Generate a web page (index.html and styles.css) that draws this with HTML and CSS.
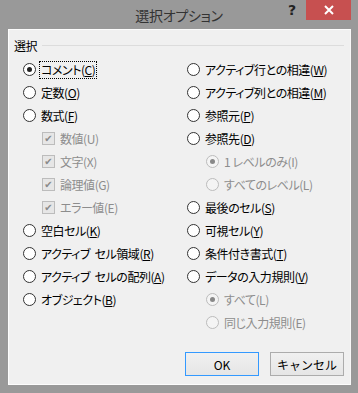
FILE: index.html
```html
<!DOCTYPE html>
<html lang="ja">
<head>
    <meta charset="UTF-8">
    <title>選択オプション</title>
    <link rel="stylesheet" href="styles.css">
</head>
<body>

<div class="window">
    <div class="titlebar">
        <span class="title">選択オプション</span>
        <span class="help">?</span>
        <span class="close">
            <svg width="10" height="10" viewBox="0 0 10 10"><path d="M1 1 L9 9 M9 1 L1 9" stroke="#fff" stroke-width="2"/></svg>
        </span>
    </div>

    <div class="client">
        <div class="group-head">
            <span>選択</span>
            <div class="group-line"></div>
        </div>

        <div class="columns">
            <div class="col">
                <div class="row"><span class="radio checked"></span><span class="label focus">コメント(<u>C</u>)</span></div>
                <div class="row"><span class="radio"></span><span class="label">定数(<u>O</u>)</span></div>
                <div class="row"><span class="radio"></span><span class="label">数式(<u>F</u>)</span></div>
                <div class="row sub disabled"><span class="check">&#10004;</span><span class="label">数値(U)</span></div>
                <div class="row sub disabled"><span class="check">&#10004;</span><span class="label">文字(X)</span></div>
                <div class="row sub disabled"><span class="check">&#10004;</span><span class="label">論理値(G)</span></div>
                <div class="row sub disabled"><span class="check">&#10004;</span><span class="label">エラー値(E)</span></div>
                <div class="row"><span class="radio"></span><span class="label">空白セル(<u>K</u>)</span></div>
                <div class="row"><span class="radio"></span><span class="label">アクティブ&nbsp; セル領域(<u>R</u>)</span></div>
                <div class="row"><span class="radio"></span><span class="label">アクティブ&nbsp; セルの配列(<u>A</u>)</span></div>
                <div class="row"><span class="radio"></span><span class="label">オブジェクト(<u>B</u>)</span></div>
            </div>
            <div class="col">
                <div class="row"><span class="radio"></span><span class="label">アクティブ行との相違(<u>W</u>)</span></div>
                <div class="row"><span class="radio"></span><span class="label">アクティブ列との相違(<u>M</u>)</span></div>
                <div class="row"><span class="radio"></span><span class="label">参照元(<u>P</u>)</span></div>
                <div class="row"><span class="radio"></span><span class="label">参照先(<u>D</u>)</span></div>
                <div class="row sub disabled"><span class="radio checked"></span><span class="label">1 レベルのみ(I)</span></div>
                <div class="row sub disabled"><span class="radio"></span><span class="label">すべてのレベル(L)</span></div>
                <div class="row"><span class="radio"></span><span class="label">最後のセル(<u>S</u>)</span></div>
                <div class="row"><span class="radio"></span><span class="label">可視セル(<u>Y</u>)</span></div>
                <div class="row"><span class="radio"></span><span class="label">条件付き書式(<u>T</u>)</span></div>
                <div class="row"><span class="radio"></span><span class="label">データの入力規則(<u>V</u>)</span></div>
                <div class="row sub disabled"><span class="radio checked"></span><span class="label">すべて(L)</span></div>
                <div class="row sub disabled"><span class="radio"></span><span class="label">同じ入力規則(E)</span></div>
            </div>
        </div>

        <div class="buttons">
            <button class="btn default">OK</button>
            <button class="btn">キャンセル</button>
        </div>
    </div>
</div>

</body>
</html>
```

FILE: styles.css
```css
body {
    margin: 0;
    background: #999;
    font-family: "Noto Sans CJK JP", "Noto Sans", sans-serif;
    font-feature-settings: "palt";
}

.window {
    width: 358px;
    height: 393px;
    display: flex;
    flex-direction: column;
}

/* タイトルバー */
.titlebar {
    height: 29px;
    position: relative;
    display: flex;
    justify-content: center;
}

.title {
    font-size: 14px;
    line-height: 14px;
    margin-top: 8px;
    color: #333;
    letter-spacing: -0.3px;
}

.help {
    position: absolute;
    left: 288px;
    top: 2px;
    font-family: "DejaVu Sans", sans-serif;
    font-weight: bold;
    font-size: 14px;
    color: #222;
}

.close {
    position: absolute;
    left: 306px;
    top: 0;
    width: 45px;
    height: 20px;
    background: #c75050;
    display: flex;
    align-items: center;
    justify-content: center;
}

/* 本体 */
.client {
    flex: 1;
    margin: 0 7px 8px 8px;
    background: #f0f0f0;
    border: 1px solid #fcfcfc;
    border-right-color: #f8f8f8;
    display: flex;
    flex-direction: column;
    font-size: 12px;
    letter-spacing: -0.45px;
    color: #000;
}

.group-head {
    display: flex;
    align-items: center;
    height: 16px;
    margin-top: 7px;
    padding: 0 6px 0 5px;
}

.group-line {
    flex: 1;
    height: 1px;
    background: #dcdcdc;
    margin-left: 5px;
}

.columns {
    display: grid;
    grid-template-columns: 164px 1fr;
    padding-left: 14px;
    margin-top: 5px;
}

.row {
    height: 23px;
    display: flex;
    align-items: center;
    white-space: nowrap;
}

.row.sub {
    padding-left: 19px;
}

.label {
    margin-left: 3px;
    padding: 1px 1px;
    line-height: 14px;
    border: 1px solid transparent;
}

.label.focus {
    border: 1px dotted #000;
}

.disabled .label {
    color: #8d8d8d;
}

.radio {
    width: 11px;
    height: 11px;
    border: 1px solid #333;
    border-radius: 50%;
    background: #fff;
    display: flex;
    align-items: center;
    justify-content: center;
    flex-shrink: 0;
}

.radio.checked::after {
    content: "";
    width: 5px;
    height: 5px;
    border-radius: 50%;
    background: #222;
}

.disabled .radio {
    border-color: #bcbcbc;
    background: #f4f4f4;
}

.disabled .radio.checked::after {
    background: #888;
}

.check {
    width: 11px;
    height: 11px;
    border: 1px solid #bcbcbc;
    background: #e6e6e6;
    color: #8a8a8a;
    font-family: "DejaVu Sans", sans-serif;
    font-size: 10px;
    line-height: 11px;
    text-align: center;
    letter-spacing: 0;
    flex-shrink: 0;
}

.buttons {
    margin-top: auto;
    display: flex;
    justify-content: flex-end;
    gap: 11px;
    padding: 0 6px 8px 0;
}

.btn {
    width: 74px;
    height: 24px;
    border: 1px solid #acacac;
    background: linear-gradient(#f0f0f0, #e5e5e5);
    font-family: inherit;
    font-size: 12px;
    letter-spacing: 0;
    color: #000;
    padding: 0;
}

.btn.default {
    border-color: #3399ff;
}
```
